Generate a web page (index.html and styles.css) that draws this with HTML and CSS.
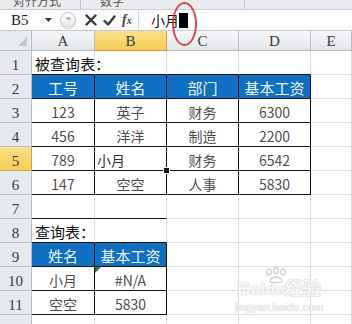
FILE: index.html
```html
<!DOCTYPE html>
<html lang="zh-CN">
<head>
  <meta charset="UTF-8">
  <title>查询表</title>
  <link rel="stylesheet" href="styles.css">
</head>
<body>
  <div class="ribbon">
    <span class="grp g1">对齐方式</span>
    <span class="sep"></span>
    <span class="grp g2">数字</span>
    <span class="sep"></span>
  </div>

  <div class="fbar">
    <div class="namebox">
      <span>B5</span>
      <svg class="drop" width="7" height="4" viewBox="0 0 7 4"><path d="M0 0h7L3.5 4z" fill="#333"/></svg>
    </div>
    <div class="handle"><span></span></div>
    <div class="btns">
      <svg width="12" height="12" viewBox="0 0 12 12"><path d="M1.5 1.5l9 9M10.5 1.5l-9 9" stroke="#3a3a3a" stroke-width="2.4" stroke-linecap="round"/></svg>
      <svg width="13" height="11" viewBox="0 0 13 11"><path d="M1.5 6l3.5 3.5L11.5 1.5" stroke="#3a3a3a" stroke-width="2.4" fill="none" stroke-linecap="round" stroke-linejoin="round"/></svg>
      <span class="fx">f<i>x</i></span>
    </div>
    <div class="input">小月<span class="caret"></span></div>
  </div>

  <div class="sheet">
    <div class="c corner"><span></span></div>
    <div class="c ch">A</div>
    <div class="c ch sel">B</div>
    <div class="c ch">C</div>
    <div class="c ch">D</div>
    <div class="c ch">E</div>

    <div class="c rh">1</div>
    <div class="c bt title">被查询表：</div>
    <div class="c bt"></div>
    <div class="c bt"></div>
    <div class="c bt"></div>
    <div class="c"></div>

    <div class="c rh">2</div>
    <div class="c tb hd">工号</div>
    <div class="c tb hd">姓名</div>
    <div class="c tb hd">部门</div>
    <div class="c tb hd">基本工资</div>
    <div class="c"></div>

    <div class="c rh">3</div>
    <div class="c tb">123</div>
    <div class="c tb">英子</div>
    <div class="c tb">财务</div>
    <div class="c tb">6300</div>
    <div class="c"></div>

    <div class="c rh">4</div>
    <div class="c tb">456</div>
    <div class="c tb">洋洋</div>
    <div class="c tb">制造</div>
    <div class="c tb">2200</div>
    <div class="c"></div>

    <div class="c rh sel">5</div>
    <div class="c tb">789</div>
    <div class="c tb active">小月</div>
    <div class="c tb">财务</div>
    <div class="c tb">6542</div>
    <div class="c"></div>

    <div class="c rh">6</div>
    <div class="c tb">147</div>
    <div class="c tb">空空</div>
    <div class="c tb">人事</div>
    <div class="c tb">5830</div>
    <div class="c"></div>

    <div class="c rh">7</div>
    <div class="c bt"></div>
    <div class="c bt"></div>
    <div class="c"></div>
    <div class="c"></div>
    <div class="c"></div>

    <div class="c rh">8</div>
    <div class="c bt title">查询表：</div>
    <div class="c bt"></div>
    <div class="c"></div>
    <div class="c"></div>
    <div class="c"></div>

    <div class="c rh">9</div>
    <div class="c tb hd">姓名</div>
    <div class="c tb hd">基本工资</div>
    <div class="c"></div>
    <div class="c"></div>
    <div class="c"></div>

    <div class="c rh">10</div>
    <div class="c tb">小月</div>
    <div class="c tb err">#N/A</div>
    <div class="c"></div>
    <div class="c"></div>
    <div class="c"></div>

    <div class="c rh">11</div>
    <div class="c tb">空空</div>
    <div class="c tb">5830</div>
    <div class="c"></div>
    <div class="c"></div>
    <div class="c"></div>

    <div class="c rh">12</div>
    <div class="c"></div>
    <div class="c"></div>
    <div class="c"></div>
    <div class="c"></div>
    <div class="c"></div>
  </div>

  <!-- watermark and the red mark drawn over the shot -->
  <div class="mark">
    <div class="paw">
      <svg width="30" height="16" viewBox="0 0 30 16"><g fill="none" stroke="#d2d2d2" stroke-width="1.3"><ellipse cx="8" cy="5" rx="2.5" ry="3"/><ellipse cx="15" cy="3.5" rx="2.5" ry="3"/><ellipse cx="22" cy="5" rx="2.5" ry="3"/><path d="M9 14c0-5 12-5 12 0c0 2-12 2-12 0z"/></g></svg>
    </div>
    <div class="brand">Bai<span>du</span>经验</div>
    <div class="url">jingyan.baidu.com</div>
  </div>
  <div class="ring"></div>
</body>
</html>
```

FILE: styles.css
```css
body {
  margin: 0;
  width: 352px;
  height: 324px;
  overflow: hidden;
  background: #fff;
  font-family: "Noto Sans CJK SC", sans-serif;
  position: relative;
}

.ribbon {
  height: 9px;
  background: #e9ebee;
  border-bottom: 1px solid #c9ccd1;
  display: flex;
  overflow: hidden;
  font-size: 12px;
  color: #555;
}

.grp {
  line-height: 12px;
  margin-top: -5px;
}

.g1 {
  width: 67px;
  padding-left: 13px;
}

.g2 {
  width: 144px;
  padding-left: 19px;
}

.sep {
  width: 1px;
  background: #c4c7cc;
}

.fbar {
  height: 20px;
  display: flex;
  align-items: center;
  border-bottom: 1px solid #c5c8cd;
  background: #fbfbfc;
}

.namebox {
  width: 57px;
  height: 20px;
  box-sizing: border-box;
  display: flex;
  align-items: center;
  justify-content: space-between;
  padding: 0 5px 0 11px;
  background: #fff;
  font-family: "Liberation Serif", serif;
  font-size: 15px;
  color: #222;
}

.handle {
  width: 14px;
  height: 15px;
  margin-left: 3px;
  border: 1px solid #c8cacd;
  border-radius: 50%;
  background: linear-gradient(#fdfdfd, #e4e6e9);
  display: flex;
  align-items: center;
  justify-content: center;
}

.handle span {
  width: 5px;
  height: 3px;
  border-radius: 2px;
  background: #b9bcc1;
  margin-top: -3px;
}

.btns {
  display: flex;
  align-items: center;
  gap: 6px;
  margin-left: 9px;
  width: 53px;
}

.fx {
  font-family: "Liberation Serif", serif;
  font-style: italic;
  font-weight: bold;
  font-size: 14px;
  color: #444;
}

.fx i {
  font-size: 10px;
}

.input {
  flex: 1;
  height: 20px;
  border-left: 1px solid #d4d6d9;
  background: #fff;
  display: flex;
  align-items: center;
  padding-left: 12px;
  font-size: 14px;
  color: #111;
}

.caret {
  width: 9px;
  height: 15px;
  background: #000;
}

.sheet {
  display: grid;
  grid-template-columns: 32px 63px 72px 72px 72px 41px;
  grid-template-rows: 20px repeat(12, 24px);
}

.c {
  box-sizing: border-box;
  border-right: 1px solid #dadcdf;
  border-bottom: 1px solid #dadcdf;
  display: flex;
  align-items: center;
  justify-content: center;
  padding-top: 2px;
  font-size: 14px;
  color: #4f4f4f;
  white-space: nowrap;
  position: relative;
}

.corner {
  background: #e7eaee;
  border-color: #b9bdc4;
}

.corner span {
  position: absolute;
  right: 4px;
  bottom: 4px;
  border-left: 9px solid transparent;
  border-bottom: 9px solid #c3c6cb;
}

.ch {
  background: linear-gradient(#f6f7f9, #e3e6ea);
  border-color: #b9bdc4;
  font-family: "Liberation Serif", serif;
  font-size: 15px;
  color: #3a3a3a;
}

.rh {
  background: #e6e9ed;
  border-color: #b9bdc4;
  font-family: "Liberation Serif", serif;
  font-size: 15px;
  color: #3a3a3a;
  padding-top: 6px;
}

.sel {
  background: linear-gradient(#fbe08a, #f6cc55);
  border-color: #c9a44a;
}

.bt {
  border-bottom-color: #111;
}

.tb {
  border-right-color: #111;
  border-bottom-color: #111;
}

.hd {
  background: #0f6fc3;
  color: #eef7ff;
  font-size: 15px;
}

.title {
  justify-content: flex-start;
  padding-left: 3px;
  font-size: 15px;
  color: #111;
  overflow: visible;
  z-index: 1;
}

.active {
  justify-content: flex-start;
  padding-left: 2px;
  color: #333;
}

.active::after {
  content: "";
  position: absolute;
  right: -4px;
  bottom: -4px;
  width: 5px;
  height: 5px;
  background: #111;
  border: 1px solid #fff;
  z-index: 2;
}

.err::before {
  content: "";
  position: absolute;
  left: 0;
  top: 0;
  border-top: 6px solid #2e7d32;
  border-right: 6px solid transparent;
}

.mark {
  position: absolute;
  left: 233px;
  top: 267px;
  width: 92px;
  display: flex;
  flex-direction: column;
  align-items: center;
  color: rgba(255, 255, 255, 0.9);
  text-shadow: 0 0 1px #c4c4c4, 0 0 1px #c4c4c4;
  line-height: 1;
}

.paw {
  margin-left: -6px;
  height: 16px;
}

.brand {
  font-family: "Liberation Sans", sans-serif;
  font-weight: bold;
  font-size: 18px;
  margin-top: -3px;
}

.brand span {
  font-size: 16px;
}

.url {
  font-family: "Liberation Sans", sans-serif;
  font-size: 11px;
  margin-top: 4px;
}

.ring {
  position: absolute;
  left: 172px;
  top: 2px;
  width: 21px;
  height: 40px;
  border: 2px solid rgba(205, 40, 50, 0.85);
  border-radius: 50%;
}
```
